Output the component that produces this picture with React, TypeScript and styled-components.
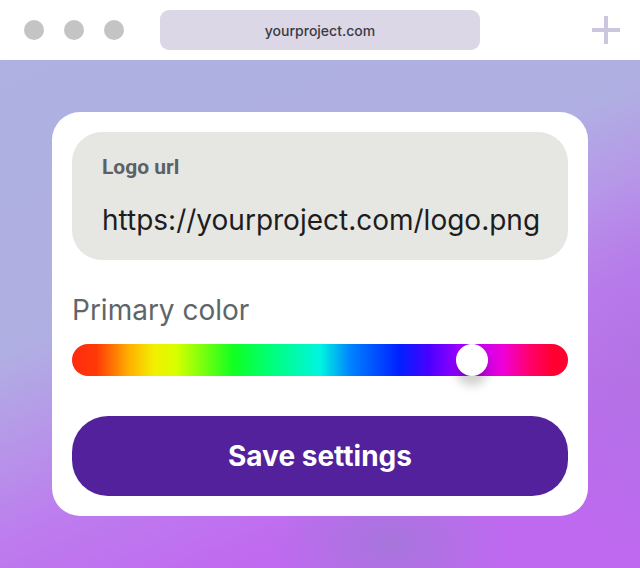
import React from "react";
import styled, { createGlobalStyle } from "styled-components";

const Global = createGlobalStyle`
  html, body { margin: 0; padding: 0; }
  body { font-family: Inter, "Noto Sans", sans-serif; }
  * { box-sizing: border-box; }
`;

const Page = styled.div`
  width: 640px;
  height: 568px;
  display: flex;
  flex-direction: column;
  overflow: hidden;
`;

const TopBar = styled.header`
  height: 60px;
  flex: none;
  background: #ffffff;
  display: flex;
  align-items: center;
  padding: 0 20px 0 24px;
`;

const Dots = styled.div`
  display: flex;
  gap: 20px;
`;

const Dot = styled.span`
  width: 20px;
  height: 20px;
  border-radius: 50%;
  background: #c4c4c4;
`;

const AddressBar = styled.div`
  margin-left: 36px;
  width: 320px;
  height: 40px;
  border-radius: 9px;
  background: #dcd7e6;
  display: flex;
  align-items: center;
  justify-content: center;
  font-family: Inter, sans-serif;
  font-size: 14px;
  font-weight: 500;
  color: #3a3a42;
`;

const PlusButton = styled.span`
  margin-left: auto;
  width: 28px;
  height: 28px;
  position: relative;
  &::before,
  &::after {
    content: "";
    position: absolute;
    background: #cbc6de;
  }
  &::before {
    left: 0;
    right: 0;
    top: 12px;
    height: 4px;
  }
  &::after {
    top: 0;
    bottom: 0;
    left: 12px;
    width: 4px;
  }
`;

const Stage = styled.main`
  flex: 1;
  display: flex;
  justify-content: center;
  align-items: flex-start;
  padding-top: 52px;
  background:
    radial-gradient(ellipse 120px 70px at 61% 95%, rgba(160, 120, 214, 0.8), rgba(160, 120, 214, 0) 100%),
    radial-gradient(ellipse 140px 200px at 102% 62%, rgba(168, 118, 220, 0.6), rgba(168, 118, 220, 0) 100%),
    linear-gradient(157deg, #afb1e2 0%, #b0afe3 38%, #bd7cee 62%, #c06af0 78%, #bf68f0 100%);
`;

const Card = styled.section`
  width: 536px;
  background: #ffffff;
  border-radius: 28px;
  padding: 20px;
  display: flex;
  flex-direction: column;
`;

const Field = styled.div`
  height: 128px;
  border-radius: 30px;
  background: #e6e7e3;
  padding: 24px 20px 0 30px;
  display: flex;
  flex-direction: column;
  gap: 26px;
`;

const FieldLabel = styled.label`
  font-family: Roboto, sans-serif;
  font-weight: 700;
  font-size: 21px;
  line-height: 22px;
  color: #5b6265;
`;

const FieldValue = styled.div`
  font-family: Inter, sans-serif;
  font-size: 28px;
  line-height: 32px;
  color: #1d1d1f;
  white-space: nowrap;
`;

const SectionLabel = styled.div`
  margin-top: 34px;
  font-family: Inter, sans-serif;
  font-size: 28px;
  line-height: 32px;
  color: #5f6669;
`;

const HueTrack = styled.div`
  margin-top: 18px;
  height: 32px;
  border-radius: 16px;
  position: relative;
  background: linear-gradient(
    to right,
    #ff2a10 0%,
    #ff3a08 5%,
    #ffb000 11.5%,
    #f2ef00 16.5%,
    #d8ff00 21%,
    #10ff20 32.5%,
    #00ff78 40%,
    #00f5e0 50%,
    #0084ff 56%,
    #0020ff 66%,
    #4a00ff 72%,
    #9a00ff 78%,
    #f000d8 87%,
    #ff0070 92%,
    #ff0030 97%,
    #ff0030 100%
  );
`;

const Thumb = styled.span`
  position: absolute;
  top: 0;
  width: 32px;
  height: 32px;
  border-radius: 50%;
  background: #ffffff;
  box-shadow: 0 10px 10px rgba(0, 0, 0, 0.18);
  transform: translateX(-50%);
`;

const SaveButton = styled.button`
  margin-top: 40px;
  height: 80px;
  border: none;
  border-radius: 36px;
  background: #52219b;
  color: #ffffff;
  font-family: Inter, sans-serif;
  font-weight: 700;
  font-size: 28px;
  cursor: pointer;
`;

export default function App() {
  const hue = 0.806;
  return (
    <>
      <Global />
      <Page>
        <TopBar>
          <Dots>
            <Dot />
            <Dot />
            <Dot />
          </Dots>
          <AddressBar>yourproject.com</AddressBar>
          <PlusButton />
        </TopBar>
        <Stage>
          <Card>
            <Field>
              <FieldLabel>Logo url</FieldLabel>
              <FieldValue>https://yourproject.com/logo.png</FieldValue>
            </Field>
            <SectionLabel>Primary color</SectionLabel>
            <HueTrack>
              <Thumb style={{ left: `${hue * 100}%` }} />
            </HueTrack>
            <SaveButton>Save settings</SaveButton>
          </Card>
        </Stage>
      </Page>
    </>
  );
}
